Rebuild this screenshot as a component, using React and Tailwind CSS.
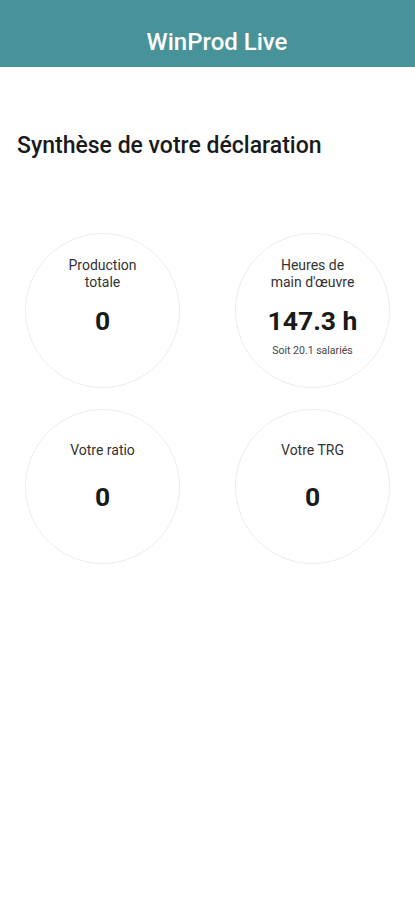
import React from 'react';

// ── Stat circle ────────────────────────────────────────
function StatCircle({ label, value, sub }) {
  return (
    <div className="w-[155px] h-[155px] rounded-full border border-[#ececec] bg-white flex flex-col items-center pt-[18px]">
      <div className="h-[44px] w-[96px] flex items-center justify-center text-center text-[14px] leading-[17px] text-[#333333]">
        {label}
      </div>
      <div className="mt-[10px] text-[26.5px] leading-[30px] font-bold text-[#1a1a1a]">
        {value}
      </div>
      {sub && <div className="mt-[9px] text-[10.5px] leading-[12px] text-[#444444]">{sub}</div>}
    </div>
  );
}

export default function App() {
  return (
    <div className="min-h-[900px] bg-white" style={{ fontFamily: 'Roboto, "Noto Sans", sans-serif' }}>
      {/* Header */}
      <div className="h-[67px] bg-[#48939a] flex items-center justify-center pl-[19px]">
        <h1 className="pt-[16px] text-white text-[24px] font-medium leading-none">WinProd Live</h1>
      </div>

      {/* Title */}
      <h2 className="mt-[65px] px-[17px] text-[23px] leading-[28px] font-medium text-[#1a1a1a]">
        Synthèse de votre déclaration
      </h2>

      {/* Stats */}
      <div className="mt-[73px] px-[25px] grid grid-cols-2 gap-x-[55px] gap-y-[21px] justify-items-center">
        <StatCircle label="Production totale" value="0" />
        <StatCircle label="Heures de main d'œuvre" value="147.3 h" sub="Soit 20.1 salariés" />
        <StatCircle label="Votre ratio" value="0" />
        <StatCircle label="Votre TRG" value="0" />
      </div>
    </div>
  );
}
